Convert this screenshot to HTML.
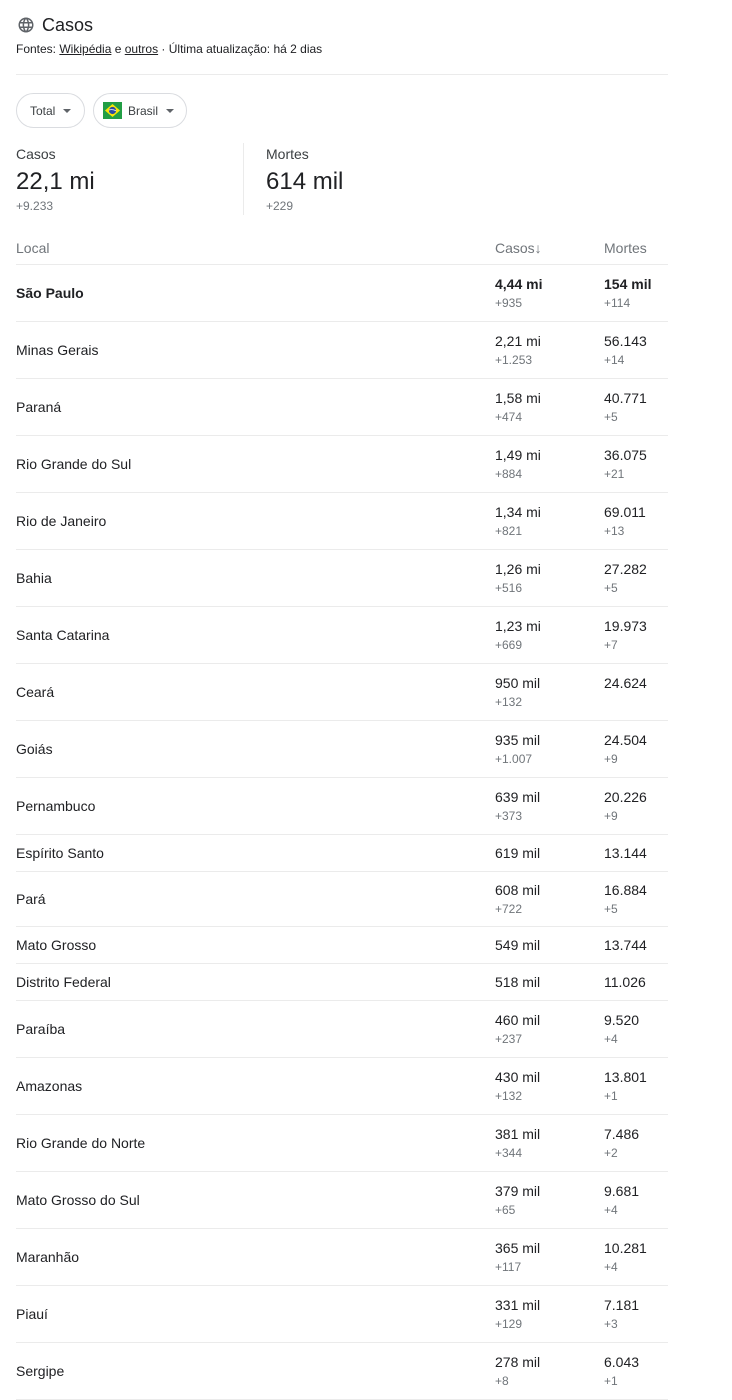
<!DOCTYPE html>
<html><head><meta charset="utf-8"><style>
body{margin:0;background:#fff;font-family:"Liberation Sans",Arial,sans-serif;color:#202124;width:732px;height:1400px;overflow:hidden;position:relative}
.a{position:absolute;white-space:nowrap}
.g{color:#70757a}
table{position:absolute;left:16px;top:231px;width:652px;border-collapse:collapse}
td{padding:0;border-bottom:1px solid #ebebeb;font-size:14px;vertical-align:middle}
tr.h td{height:33px;color:#70757a;font-size:14px}
tr.d td{height:56px}
tr.s td{height:36px}
tr.p td{height:54px}
td.c1{width:479px}
td.c2{width:109px}
.v{line-height:20px}
.dl{font-size:12px;color:#70757a;line-height:19px}
b{font-weight:bold}
.btn{position:absolute;top:93px;height:35px;border:1px solid #dadce0;border-radius:18px;font-size:12px;color:#3c4043;display:flex;align-items:center;box-sizing:border-box}
.tri{display:inline-block;border-left:4px solid transparent;border-right:4px solid transparent;border-top:4px solid #5f6368;margin-left:8px}
</style></head><body>
<svg class="a" style="left:17px;top:16px" width="18" height="18" viewBox="0 0 24 24"><path fill="#5f6368" d="M12 2C6.48 2 2 6.48 2 12s4.480 10 10 10 10-4.48 10-10S17.52 2 12 2zm6.93 6h-2.950a15.7 15.7 0 0 0-1.38-3.56A8.03 8.03 0 0 1 18.93 8zM12 4.04c.83 1.2 1.48 2.53 1.91 3.96h-3.82c.43-1.43 1.08-2.76 1.91-3.96zM4.26 14C4.1 13.36 4 12.69 4 12s.1-1.36.26-2h3.38c-.08.66-.14 1.32-.14 2s.06 1.34.14 2H4.26zm.82 2h2.95c.32 1.25.78 2.45 1.38 3.56A7.99 7.99 0 0 1 5.08 16zm2.95-8H5.08a7.99 7.99 0 0 1 4.33-3.56A15.65 15.65 0 0 0 8.03 8zM12 19.96c-.83-1.2-1.48-2.53-1.91-3.96h3.82c-.43 1.43-1.08 2.76-1.91 3.960zM14.34 14H9.66c-.09-.66-.16-1.32-.16-2s.07-1.35.16-2h4.68c.09.65.16 1.32.16 2s-.07 1.34-.16 2zm.25 5.56c.6-1.11 1.06-2.31 1.38-3.56h2.95a8.03 8.03 0 0 1-4.33 3.56zM16.36 14c.08-.66.14-1.32.14-2s-.06-1.34-.14-2h3.38c.16.64.26 1.31.26 2s-.1 1.36-.26 2h-3.38z"/></svg>
<div class="a" style="left:42px;top:15px;font-size:18px;color:#202124">Casos</div>
<div class="a" style="left:16px;top:42px;font-size:12px;color:#202124">Fontes: <u>Wikipédia</u> e <u>outros</u> · Última atualização: há 2 dias</div>
<div class="a" style="left:16px;top:74px;width:652px;height:1px;background:#ebebeb"></div>
<div class="btn" style="left:16px;width:69px;padding-left:13px">Total<span class="tri"></span></div>
<div class="btn" style="left:93px;width:94px;padding-left:9px"><svg width="19" height="17" viewBox="0 0 19 17" style="margin-right:6px"><rect width="19" height="17" fill="#229e45"/><path d="M9.5 2L17 8.5 9.5 15 2 8.5z" fill="#f8e509"/><circle cx="9.5" cy="8.5" r="3.6" fill="#2b49a3"/><path d="M6 8c2-.6 5-.3 7 .8" stroke="#fff" stroke-width=".8" fill="none"/></svg>Brasil<span class="tri"></span></div>
<div class="a" style="left:16px;top:146px;font-size:14px;color:#3c4043">Casos</div>
<div class="a" style="left:16px;top:168px;font-size:24px">22,1 mi</div>
<div class="a g" style="left:16px;top:199px;font-size:12px">+9.233</div>
<div class="a" style="left:243px;top:143px;width:1px;height:72px;background:#ebebeb"></div>
<div class="a" style="left:266px;top:146px;font-size:14px;color:#3c4043">Mortes</div>
<div class="a" style="left:266px;top:168px;font-size:24px">614 mil</div>
<div class="a g" style="left:266px;top:199px;font-size:12px">+229</div>
<table>
<tr class="h"><td class="c1">Local</td><td class="c2">Casos↓</td><td>Mortes</td></tr>
<tr class="d"><td class="c1"><b>São Paulo</b></td><td class="c2"><div class="v"><b>4,44 mi</b></div><div class="dl">+935</div></td><td><div class="v"><b>154 mil</b></div><div class="dl">+114</div></td></tr>
<tr class="d"><td class="c1">Minas Gerais</td><td class="c2"><div class="v">2,21 mi</div><div class="dl">+1.253</div></td><td><div class="v">56.143</div><div class="dl">+14</div></td></tr>
<tr class="d"><td class="c1">Paraná</td><td class="c2"><div class="v">1,58 mi</div><div class="dl">+474</div></td><td><div class="v">40.771</div><div class="dl">+5</div></td></tr>
<tr class="d"><td class="c1">Rio Grande do Sul</td><td class="c2"><div class="v">1,49 mi</div><div class="dl">+884</div></td><td><div class="v">36.075</div><div class="dl">+21</div></td></tr>
<tr class="d"><td class="c1">Rio de Janeiro</td><td class="c2"><div class="v">1,34 mi</div><div class="dl">+821</div></td><td><div class="v">69.011</div><div class="dl">+13</div></td></tr>
<tr class="d"><td class="c1">Bahia</td><td class="c2"><div class="v">1,26 mi</div><div class="dl">+516</div></td><td><div class="v">27.282</div><div class="dl">+5</div></td></tr>
<tr class="d"><td class="c1">Santa Catarina</td><td class="c2"><div class="v">1,23 mi</div><div class="dl">+669</div></td><td><div class="v">19.973</div><div class="dl">+7</div></td></tr>
<tr class="d"><td class="c1">Ceará</td><td class="c2"><div class="v">950 mil</div><div class="dl">+132</div></td><td><div class="v">24.624</div><div class="dl">&nbsp;</div></td></tr>
<tr class="d"><td class="c1">Goiás</td><td class="c2"><div class="v">935 mil</div><div class="dl">+1.007</div></td><td><div class="v">24.504</div><div class="dl">+9</div></td></tr>
<tr class="d"><td class="c1">Pernambuco</td><td class="c2"><div class="v">639 mil</div><div class="dl">+373</div></td><td><div class="v">20.226</div><div class="dl">+9</div></td></tr>
<tr class="s"><td class="c1">Espírito Santo</td><td class="c2">619 mil</td><td>13.144</td></tr>
<tr class="p"><td class="c1">Pará</td><td class="c2"><div class="v">608 mil</div><div class="dl">+722</div></td><td><div class="v">16.884</div><div class="dl">+5</div></td></tr>
<tr class="s"><td class="c1">Mato Grosso</td><td class="c2">549 mil</td><td>13.744</td></tr>
<tr class="s"><td class="c1">Distrito Federal</td><td class="c2">518 mil</td><td>11.026</td></tr>
<tr class="d"><td class="c1">Paraíba</td><td class="c2"><div class="v">460 mil</div><div class="dl">+237</div></td><td><div class="v">9.520</div><div class="dl">+4</div></td></tr>
<tr class="d"><td class="c1">Amazonas</td><td class="c2"><div class="v">430 mil</div><div class="dl">+132</div></td><td><div class="v">13.801</div><div class="dl">+1</div></td></tr>
<tr class="d"><td class="c1">Rio Grande do Norte</td><td class="c2"><div class="v">381 mil</div><div class="dl">+344</div></td><td><div class="v">7.486</div><div class="dl">+2</div></td></tr>
<tr class="d"><td class="c1">Mato Grosso do Sul</td><td class="c2"><div class="v">379 mil</div><div class="dl">+65</div></td><td><div class="v">9.681</div><div class="dl">+4</div></td></tr>
<tr class="d"><td class="c1">Maranhão</td><td class="c2"><div class="v">365 mil</div><div class="dl">+117</div></td><td><div class="v">10.281</div><div class="dl">+4</div></td></tr>
<tr class="d"><td class="c1">Piauí</td><td class="c2"><div class="v">331 mil</div><div class="dl">+129</div></td><td><div class="v">7.181</div><div class="dl">+3</div></td></tr>
<tr class="d"><td class="c1">Sergipe</td><td class="c2"><div class="v">278 mil</div><div class="dl">+8</div></td><td><div class="v">6.043</div><div class="dl">+1</div></td></tr>
</table>
</body></html>
